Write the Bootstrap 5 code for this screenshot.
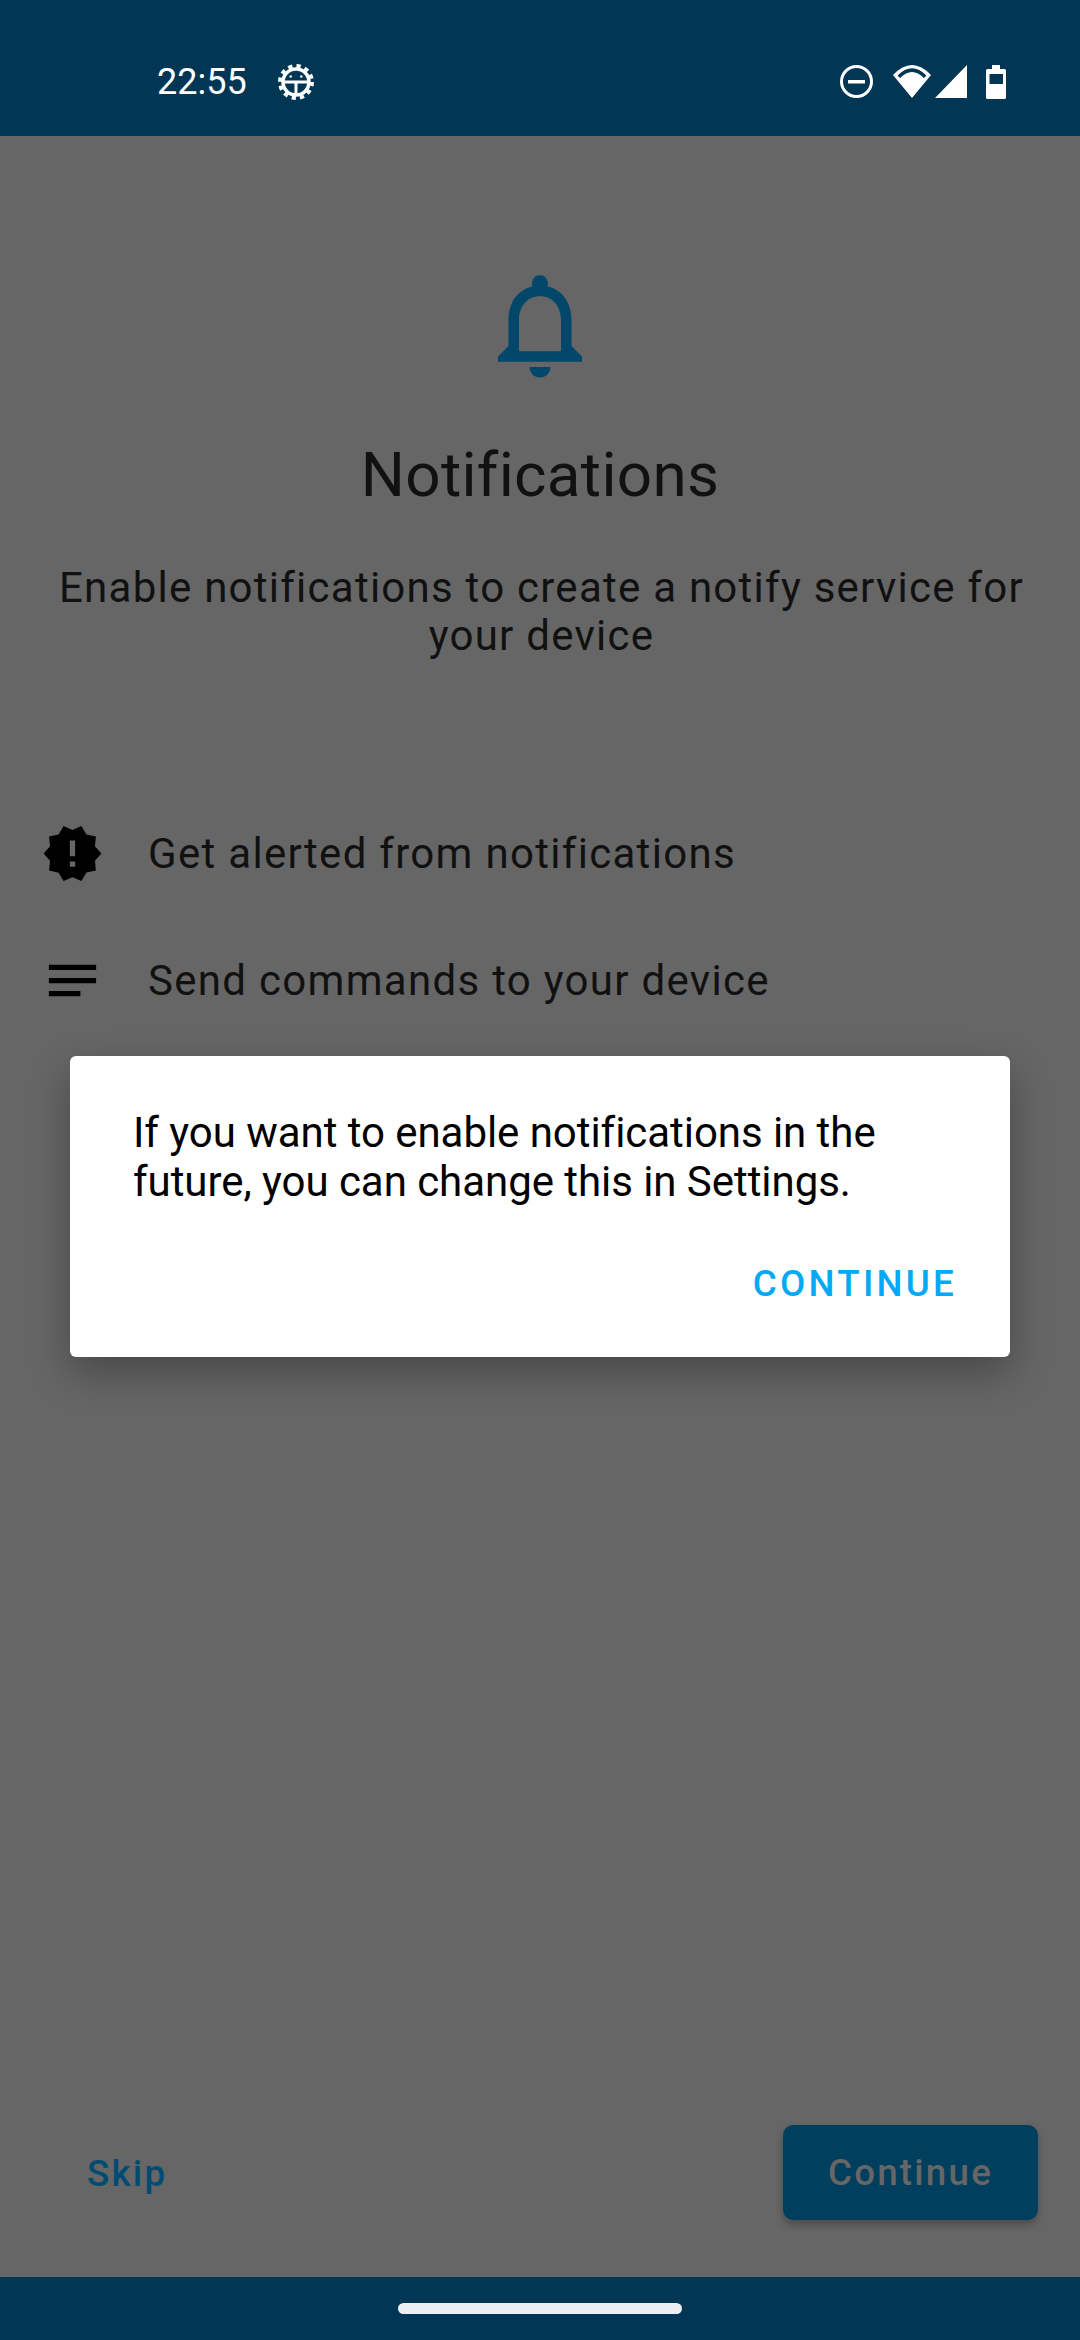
<!DOCTYPE html>
<html lang="en">
<head>
  <meta charset="UTF-8" />
  <meta name="viewport" content="width=device-width, initial-scale=1.0"/>
  <title>Notifications</title>
  <link href="https://cdn.jsdelivr.net/npm/bootstrap@5.3.0/dist/css/bootstrap.min.css" rel="stylesheet"/>
  <style>
    body { font-family: Roboto, "Liberation Sans", sans-serif; background: #666666; color: #111111; }
    .app-shell { width: 1080px; height: 2340px; position: relative; overflow: hidden; }
    .status-strip { height: 136px; background: #013654; color: #fff; padding: 28px 74px 0 157px; }
    .clock { font-size: 36px; font-weight: 400; line-height: 1; }
    .gear { margin-left: 31px; }
    .main-area { padding-top: 126px; }
    .bell { display: block; }
    .page-title { font-size: 62px; font-weight: 400; line-height: 72px; margin: 51px 0 0; letter-spacing: 0.3px; }
    .page-desc { font-size: 42px; line-height: 48px; letter-spacing: 1.25px; margin: 53px 0 0; padding: 0 38px 0 41px; }
    .feature-list { margin-top: 162px; padding-left: 41px; }
    .feature-row { height: 63px; font-size: 42px; letter-spacing: 1.3px; gap: 44px; margin-bottom: 64px; }
    .foot-bar { padding: 0 42px 57px 87px; }
    .skip-link { font-size: 36.75px; font-weight: 500; letter-spacing: 2.2px; color: #004b72; text-decoration: none; padding-top: 2px; }
    .btn-continue { width: 255px; height: 95px; background: #003f5e; color: #666666; font-size: 36.75px; font-weight: 500; letter-spacing: 2.2px; border: 0; border-radius: 10px; box-shadow: 0 5px 8px rgba(0,0,0,.25); padding: 0; }
    .btn-continue:disabled { background: #003f5e; color: #666666; opacity: 1; }
    .nav-strip { height: 63px; background: #013654; }
    .home-pill { width: 284px; height: 11px; background: #ebeff3; border-radius: 6px; }
    .dialog-box { position: absolute; left: 70px; top: 1056px; width: 940px; height: 301px; background: #fff; border-radius: 6px; box-shadow: 0 16px 40px rgba(0,0,0,.3); padding: 52px 53px 0 63px; color: #000; }
    .dialog-text { font-size: 42px; line-height: 49px; letter-spacing: -0.05px; margin: 0; }
    .dialog-action { font-size: 36.75px; font-weight: 500; letter-spacing: 3.2px; color: #03a9f4; text-decoration: none; line-height: 1; margin-top: 60px; }
  </style>
</head>
<body>
  <div class="app-shell d-flex flex-column">
    <!-- Status bar -->
    <div class="status-strip d-flex align-items-center flex-shrink-0">
      <span class="clock">22:55</span>
      <svg class="gear" width="36" height="36" viewBox="0 0 36 36" fill="none" stroke="#fff">
        <circle cx="18" cy="18" r="16" stroke-width="4" stroke-dasharray="4.2 4.18"/>
        <circle cx="18" cy="18" r="13" stroke-width="3.5"/>
        <path d="M5 18h26M18 18v13" stroke-width="3"/>
        <circle cx="12.7" cy="12.500" r="1.3" fill="#fff" stroke="none"/>
        <circle cx="23.3" cy="12.500" r="1.3" fill="#fff" stroke="none"/>
      </svg>
      <svg class="ms-auto" width="166" height="34" viewBox="840 65 166 34" fill="#fff">
        <circle cx="856.5" cy="81.5" r="15" fill="none" stroke="#fff" stroke-width="3"/>
        <rect x="848" y="80" width="17" height="3.5"/>
        <path fill-rule="evenodd" d="M893 75Q912 55 931 75L912 98ZM897.500 75.500Q912 61 926.500 75.500L924 78Q912 66 900 78Z"/>
        <path d="M967 65V98H935Z"/>
        <path fill-rule="evenodd" d="M992 65h8v4h4.500a1.500 1.500 0 0 1 1.500 1.500V97.500a1.500 1.500 0 0 1-1.500 1.500H987.500a1.500 1.500 0 0 1-1.500-1.500V70.500a1.500 1.500 0 0 1 1.500-1.500H992ZM989.500 74V84H1003V74Z"/>
      </svg>
    </div>

    <!-- Onboarding content -->
    <div class="main-area flex-grow-1">
      <div class="text-center">
        <svg class="bell mx-auto" width="126" height="126" viewBox="0 0 24 24" fill="#00476a">
          <path d="M12 22c1.100 0 2-.9 2-2h-4c0 1.100.9 2 2 2zm6-6v-5c0-3.070-1.630-5.640-4.500-6.320V4c0-.83-.67-1.500-1.500-1.500s-1.500.67-1.500 1.500v.68C7.640 5.360 6 7.920 6 11v5l-2 2v1h16v-1l-2-2zm-2 1H8v-6c0-2.480 1.510-4.500 4-4.500s4 2.020 4 4.500v6z"/>
        </svg>
        <h1 class="page-title">Notifications</h1>
        <p class="page-desc">Enable notifications to create a notify service for your device</p>
      </div>
      <div class="feature-list">
        <div class="feature-row d-flex align-items-center">
          <svg width="63" height="63" viewBox="0 0 24 24" fill="#000">
            <path d="M23 12l-2.440-2.780.34-3.680-3.610-.82-1.890-3.180L12 3 8.600 1.540 6.710 4.720l-3.610.81.34 3.680L1 12l2.440 2.780-.34 3.690 3.610.82 1.890 3.180L12 21l3.400 1.460 1.890-3.180 3.610-.82-.34-3.680L23 12zm-10 5h-2v-2h2v2zm0-4h-2V7h2v6z"/>
          </svg>
          <span>Get alerted from notifications</span>
        </div>
        <div class="feature-row d-flex align-items-center">
          <svg width="63" height="63" viewBox="0 0 24 24" fill="#000">
            <path d="M21 11.010L3 11v2h18zM3 16h12v2H3zM21 6H3v2.010L21 8z"/>
          </svg>
          <span>Send commands to your device</span>
        </div>
      </div>
    </div>

    <!-- Footer actions -->
    <div class="foot-bar d-flex justify-content-between align-items-center flex-shrink-0">
      <a class="skip-link" href="#">Skip</a>
      <button class="btn btn-continue" disabled>Continue</button>
    </div>

    <!-- Gesture bar -->
    <div class="nav-strip d-flex justify-content-center align-items-center flex-shrink-0">
      <div class="home-pill"></div>
    </div>

    <!-- Dialog -->
    <div class="dialog-box d-flex flex-column">
      <p class="dialog-text">If you want to enable notifications in the future, you can change this in Settings.</p>
      <a class="dialog-action align-self-end" href="#">CONTINUE</a>
    </div>
  </div>

  <script src="https://cdn.jsdelivr.net/npm/bootstrap@5.3.0/dist/js/bootstrap.bundle.min.js"></script>
</body>
</html>
